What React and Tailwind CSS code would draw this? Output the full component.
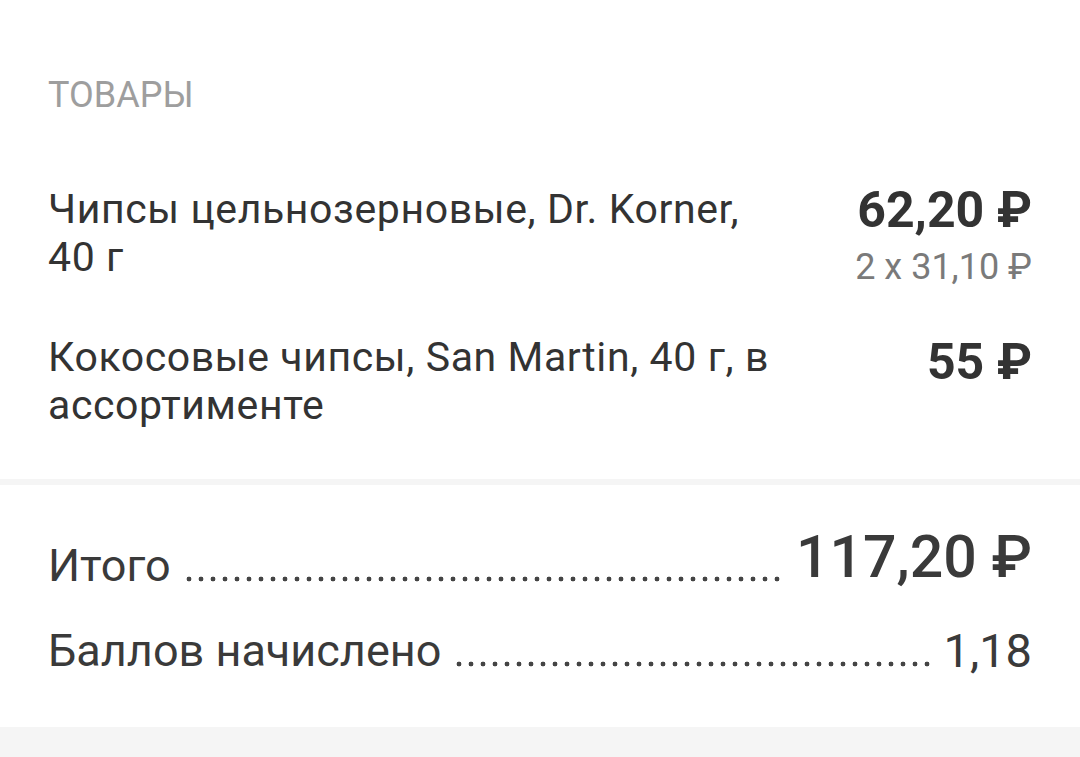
import React from "react";

const items = [
  {
    name: "Чипсы цельнозерновые, Dr. Korner, 40 г",
    price: "62,20 ₽",
    detail: "2 x 31,10 ₽",
  },
  {
    name: "Кокосовые чипсы, San Martin, 40 г, в ассортименте",
    price: "55 ₽",
    low: true,
  },
];

function Dots() {
  return (
    <div className="ml-3 mr-[10px] mb-[10px] h-[6px] flex-1 self-end bg-[radial-gradient(circle_at_center,#444444_2.1px,transparent_2.7px)] bg-[length:12px_6px] bg-repeat-x" />
  );
}

function ItemRow({ name, price, detail, low }) {
  return (
    <div className="flex items-start justify-between">
      <p className="w-[745px] text-[41px] leading-[48px] tracking-[0.6px] text-[#333333]">
        {name}
      </p>
      <div className={low ? "mt-[4px] flex flex-col items-end" : "flex flex-col items-end"}>
        <span className="text-[50px] font-bold leading-[50px] text-[#333333]">
          {price}
        </span>
        {detail && (
          <span className="mt-[8px] text-[36px] leading-[48px] text-[#7a7a7a]">
            {detail}
          </span>
        )}
      </div>
    </div>
  );
}

export default function App() {
  return (
    <div className="flex h-[757px] w-[1080px] flex-col bg-white font-['Roboto',sans-serif]">
      <section className="px-12 pb-[50px] pt-[74px]">
        <h2 className="text-[36px] leading-[43px] text-[#9e9e9e]">ТОВАРЫ</h2>
        <div className="mt-[68px] flex flex-col gap-[42px]">
          {items.map((item) => (
            <ItemRow key={item.name} {...item} />
          ))}
        </div>
      </section>

      <div className="h-[6px] bg-[#f5f5f5]" />

      <section className="flex flex-col gap-[33px] px-12 pb-[50px] pt-[37px]">
        <div className="flex items-end">
          <span className="text-[45px] leading-[52px] text-[#3a3a3a]">Итого</span>
          <Dots />
          <span className="text-[59px] font-medium leading-[70px] text-[#3a3a3a]">
            117,20 ₽
          </span>
        </div>
        <div className="flex items-end">
          <span className="text-[45px] leading-[52px] text-[#3a3a3a]">
            Баллов начислено
          </span>
          <Dots />
          <span className="text-[47px] leading-[52px] text-[#3a3a3a]">1,18</span>
        </div>
      </section>

      <div className="flex-1 bg-[#f5f5f5]" />
    </div>
  );
}
